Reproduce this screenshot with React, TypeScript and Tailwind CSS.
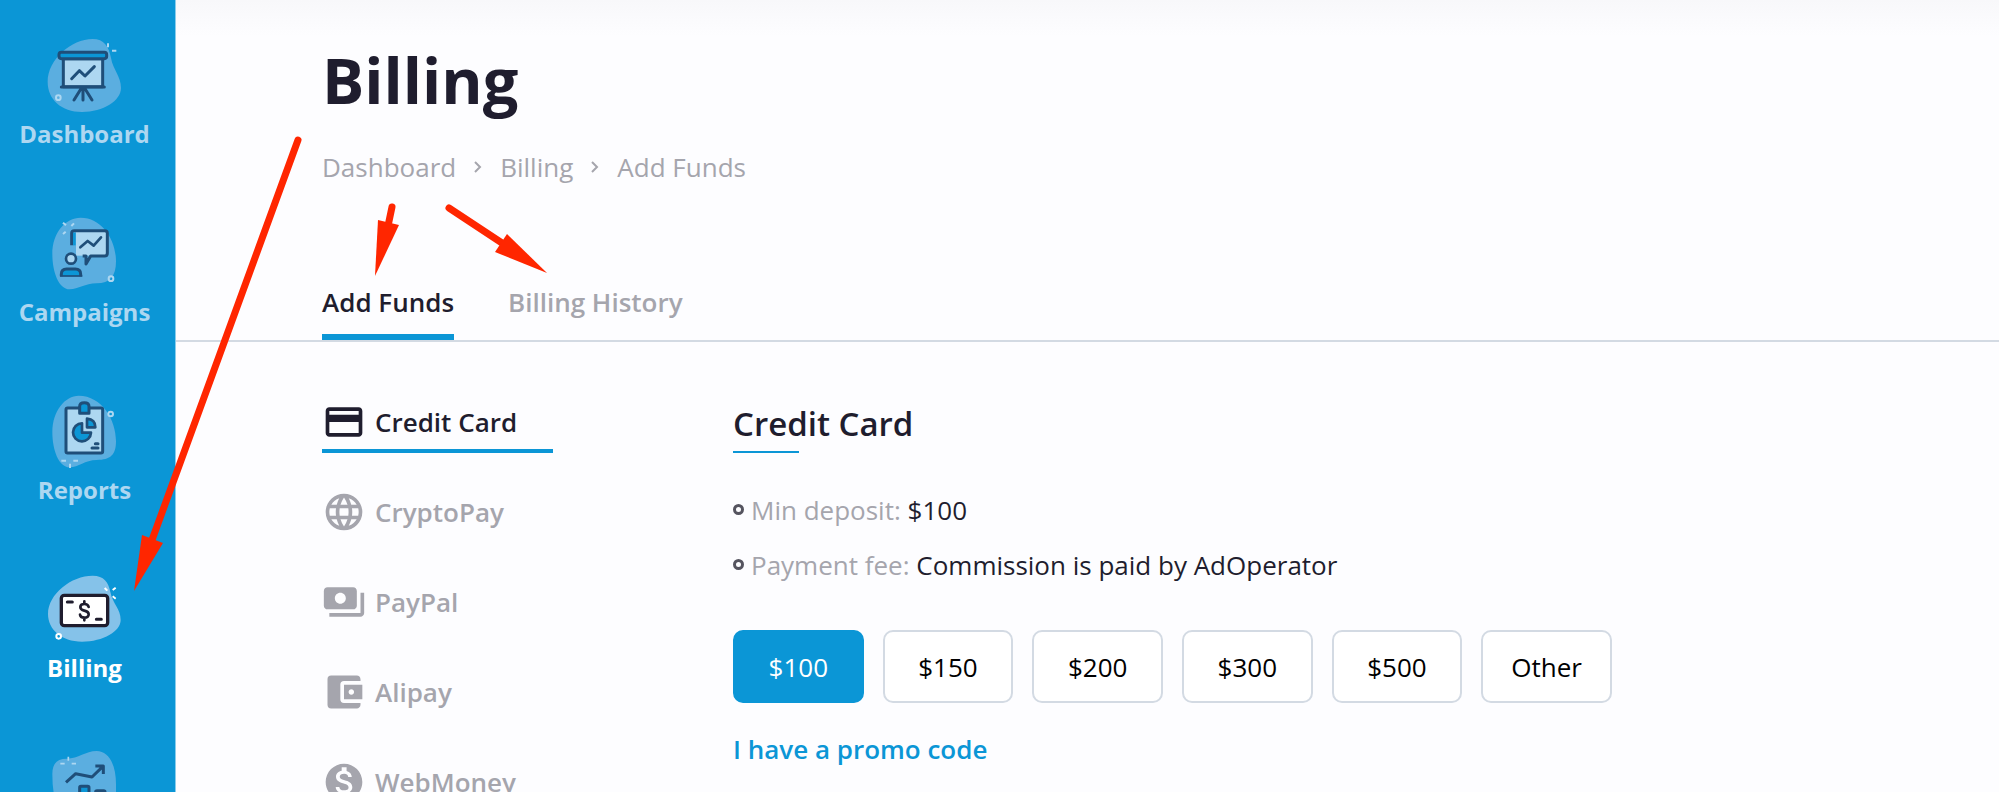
import { MdCreditCard, MdLanguage, MdPayments, MdAccountBalanceWallet, MdMonetizationOn } from "react-icons/md";
import type { ReactNode } from "react";

const INK = "#1f4e79";
const PALE = "#add7f1";
const BLOB = "#5baee0";
const BLUE = "#0b96d6";

const DashboardIcon = () => (
  <svg viewBox="120 40 270 240" className="h-20 w-[90px]" aria-hidden="true" fill="none" strokeLinecap="round" strokeLinejoin="round">
    <path d="M278 55C312 55 327 78 333 112C339 148 363 166 363 202C363 240 310 274 246 274C184 274 143 236 143 184C143 116 214 55 278 55Z" fill={BLOB} />
    <rect x="190" y="114" width="118" height="84" fill={PALE} stroke={INK} strokeWidth="9" />
    <rect x="177" y="95" width="143" height="19" rx="7" fill={BLUE} stroke={INK} strokeWidth="9" />
    <path d="M184 199H313M249 203V238M243 204L222 238M255 204L276 238" stroke={INK} strokeWidth="9" />
    <path d="M215 174L238 150L255 166L283 138" stroke={INK} strokeWidth="9" />
    <path d="M324 68V80M336 90H349" stroke={PALE} strokeWidth="6" strokeLinecap="butt" />
    <circle cx="175" cy="231" r="7" stroke={PALE} strokeWidth="6" />
  </svg>
);

const CampaignsIcon = () => (
  <svg viewBox="120 34 270 240" className="h-20 w-[90px]" aria-hidden="true" fill="none" strokeLinecap="round" strokeLinejoin="round">
    <path d="M242 51C306 51 348 118 348 182C348 226 330 248 290 248C254 248 236 266 209 266C176 266 157 214 157 160C157 96 196 51 242 51Z" fill={BLOB} />
    <path d="M228 92H322V165H228Z" fill={PALE} />
    <path d="M215 134V98Q215 90 223 90H314Q322 90 322 98V157Q322 166 314 166H272L258 190V166H248" stroke={INK} strokeWidth="9" strokeLinecap="butt" />
    <path d="M219 96H227V134H219Z" fill={BLUE} />
    <path d="M241 140L263 121L281 135L303 110" stroke={INK} strokeWidth="8" />
    <circle cx="213" cy="174" r="15" fill={PALE} stroke={INK} strokeWidth="8" />
    <path d="M184 227V220Q184 205 200 205H226Q242 205 242 220V227" fill={BLUE} stroke={INK} strokeWidth="9" strokeLinecap="butt" />
    <path d="M180 226H247" stroke={INK} strokeWidth="5" strokeLinecap="butt" />
    <path d="M189 66L198 74M214 76L222 68M189 100L197 93" stroke={PALE} strokeWidth="6" strokeLinecap="butt" />
    <circle cx="333" cy="234" r="7" stroke={PALE} strokeWidth="6" />
  </svg>
);

const ReportsIcon = () => (
  <svg viewBox="120 28 270 240" className="h-20 w-[90px]" aria-hidden="true" fill="none" strokeLinecap="round" strokeLinejoin="round">
    <path d="M236 45C306 45 348 118 348 182C348 222 332 238 290 238C254 238 236 260 209 260C176 260 157 208 157 154C157 90 196 45 236 45Z" fill={BLOB} />
    <rect x="198" y="82" width="110" height="135" rx="5" fill={PALE} stroke={INK} strokeWidth="9" />
    <path d="M239 98V77Q239 66 253 66Q267 66 267 77V98Z" fill={BLUE} stroke={INK} strokeWidth="9" />
    <path d="M246 128V156H273A27 27 0 1 1 246 128Z" fill={BLUE} stroke={INK} strokeWidth="8" />
    <path d="M261 114Q286 116 286 140H261Z" fill={BLUE} stroke={INK} strokeWidth="8" />
    <path d="M286 189H294M276 202H294" stroke={INK} strokeWidth="9" />
    <path d="M184 240H198M220 240H234M210 249V262" stroke={PALE} strokeWidth="6" strokeLinecap="butt" />
    <circle cx="332" cy="100" r="7" stroke={PALE} strokeWidth="6" />
  </svg>
);

const BillingIcon = () => (
  <svg viewBox="120 22 270 240" className="h-20 w-[90px]" aria-hidden="true" fill="none" strokeLinecap="round" strokeLinejoin="round">
    <path d="M278 45C312 45 325 64 331 94C338 130 362 144 362 178C362 212 310 243 246 243C184 243 144 206 144 160C144 100 214 45 278 45Z" fill="#85c2e9" />
    <rect x="184" y="104" width="139" height="91" rx="9" fill="#fff" stroke="#1f1d2e" strokeWidth="10" />
    <path d="M202 124H217M289 176H304" stroke="#1f1d2e" strokeWidth="9" />
    <path d="M266 139Q264 130 253 130Q241 130 241 139Q241 147 253 150Q266 153 266 161Q266 171 253 171Q241 171 240 162M253 122V130M253 171V179" stroke="#1f1d2e" strokeWidth="8" />
    <path d="M314 82L322 90M338 88L347 81M338 107L347 114" stroke="#fff" strokeWidth="6" strokeLinecap="butt" />
    <circle cx="176" cy="227" r="7" stroke="#fff" strokeWidth="6" />
  </svg>
);

const GrowthIcon = () => (
  <svg viewBox="120 556 270 240" className="h-20 w-[90px]" aria-hidden="true" fill="none" strokeLinecap="round" strokeLinejoin="round">
    <path d="M290 571C326 571 348 612 348 670V740Q348 790 250 790Q157 790 157 640C157 610 170 594 200 594C236 594 256 571 290 571Z" fill={BLOB} />
    <path d="M198 665L227 639L276 649L308 618M286 616H310V640" stroke={INK} strokeWidth="9" strokeLinecap="butt" />
    <rect x="239" y="677" width="28" height="80" rx="4" fill={BLUE} stroke={INK} strokeWidth="9" />
    <rect x="287" y="690" width="28" height="70" rx="4" fill={PALE} stroke={INK} strokeWidth="9" />
    <path d="M181 609H194M215 609H228M205 588V600" stroke={PALE} strokeWidth="5" strokeLinecap="butt" />
  </svg>
);

const navItems: { label: string; icon: ReactNode; active?: boolean }[] = [
  { label: "Dashboard", icon: <DashboardIcon /> },
  { label: "Campaigns", icon: <CampaignsIcon /> },
  { label: "Reports", icon: <ReportsIcon /> },
  { label: "Billing", icon: <BillingIcon />, active: true },
  { label: "", icon: <GrowthIcon /> },
];

const methods = [
  { label: "Credit Card", Icon: MdCreditCard, active: true },
  { label: "CryptoPay", Icon: MdLanguage, active: false },
  { label: "PayPal", Icon: MdPayments, active: false },
  { label: "Alipay", Icon: MdAccountBalanceWallet, active: false },
  { label: "WebMoney", Icon: MdMonetizationOn, active: false },
];

const terms = [
  { label: "Min deposit:", value: "$100" },
  { label: "Payment fee:", value: "Commission is paid by AdOperator" },
];

const amounts = ["$100", "$150", "$200", "$300", "$500", "Other"];

const Chevron = () => (
  <svg viewBox="0 0 8 12" className="h-3 w-2" fill="none" stroke="#a5a5ad" strokeWidth="2" aria-hidden="true">
    <path d="M1 1L6 6L1 11" />
  </svg>
);

const Arrows = () => (
  <svg className="pointer-events-none absolute top-0 left-0" width="600" height="620" fill="#ff2600" stroke="#ff2600" aria-hidden="true">
    <g strokeWidth="7" strokeLinecap="round">
      <path d="M298 140L152 540" />
      <path d="M392 207L388 226" />
      <path d="M449 208L502 243" />
    </g>
    <g stroke="none">
      <path d="M134 591L142 535L163 543Z" />
      <path d="M375 276L378 220L399 225Z" />
      <path d="M547 273L495 252L507 234Z" />
    </g>
  </svg>
);

export default function App() {
  return (
    <div className="relative flex h-screen overflow-hidden bg-[#fdfdff] font-['Open_Sans',sans-serif] text-[26px] leading-9 text-[#1f1d2e]">
      <nav className="w-44 shrink-0 border-r border-[#8acdec] bg-[#0b96d6]" aria-label="Main">
        {navItems.map((item, i) => (
          <a
            key={i}
            href="#"
            aria-label={item.label || "Statistics"}
            className={`flex h-[178px] flex-col items-center gap-1 pt-[34px] pr-1.5 text-2xl leading-8 font-bold ${item.active ? "text-white" : "text-[#add7f1]"}`}
          >
            {item.icon}
            <span>{item.label}</span>
          </a>
        ))}
      </nav>

      <main className="min-w-0 flex-1">
        <header className="border-b-2 border-[#d3dae3] bg-linear-to-b from-[#f8f8fa] to-[#fdfdff] to-[36px] pt-9 pl-[146px]">
          <h1 className="text-[63px] leading-[88px] font-bold">Billing</h1>
          <nav className="mt-[25px] flex items-center text-[#a5a5ad]" aria-label="Breadcrumb">
            <a href="#">Dashboard</a>
            <span className="px-[18px]"><Chevron /></span>
            <a href="#">Billing</a>
            <span className="px-[18px]"><Chevron /></span>
            <a href="#">Add Funds</a>
          </nav>
          <div className="mt-[99px] flex gap-[54px] font-semibold" role="tablist">
            <button role="tab" aria-selected="true" className="border-b-6 border-[#0b96d6] pb-3.5">Add Funds</button>
            <button role="tab" aria-selected="false" className="border-b-6 border-transparent pb-3.5 text-[#a5a5ad]">Billing History</button>
          </div>
        </header>

        <div className="flex pt-[58px] pl-[146px]">
          <div className="mr-[180px] flex w-[231px] shrink-0 flex-col">
            {methods.map(({ label, Icon, active }) => (
              <div key={label} className="h-[90px]">
                <button
                  className={`flex w-full items-center gap-[9px] border-b-4 pb-[5px] font-semibold ${active ? "border-[#0b96d6]" : "border-transparent text-[#a5a5ad]"}`}
                >
                  <Icon className="size-11" aria-hidden="true" />
                  {label}
                </button>
              </div>
            ))}
          </div>

          <section className="min-w-0 flex-1">
            <h2 className="text-[33px] leading-[48px] font-semibold">Credit Card</h2>
            <div className="mt-[3px] h-0.5 w-[66px] bg-[#0b96d6]" />
            <ul className="mt-[29px]">
              {terms.map(({ label, value }) => (
                <li key={label} className="flex h-[55px] items-center gap-[7px]">
                  <span className="size-[11px] rounded-full border-3 border-[#55545f]" />
                  <span><span className="text-[#a5a5ad]">{label}</span> {value}</span>
                </li>
              ))}
            </ul>
            <div className="mt-[38px] grid max-w-[879px] grid-cols-6 gap-[19px]">
              {amounts.map((amount, i) => (
                <button
                  key={amount}
                  className={`h-[73px] rounded-[10px] border-2 ${i === 0 ? "border-[#0b96d6] bg-[#0b96d6] text-white" : "border-[#d3dae3] bg-white text-black"}`}
                >
                  {amount}
                </button>
              ))}
            </div>
            <a href="#" className="mt-7 inline-block font-semibold text-[#0b96d6]">I have a promo code</a>
          </section>
        </div>
      </main>

      <Arrows />
    </div>
  );
}
